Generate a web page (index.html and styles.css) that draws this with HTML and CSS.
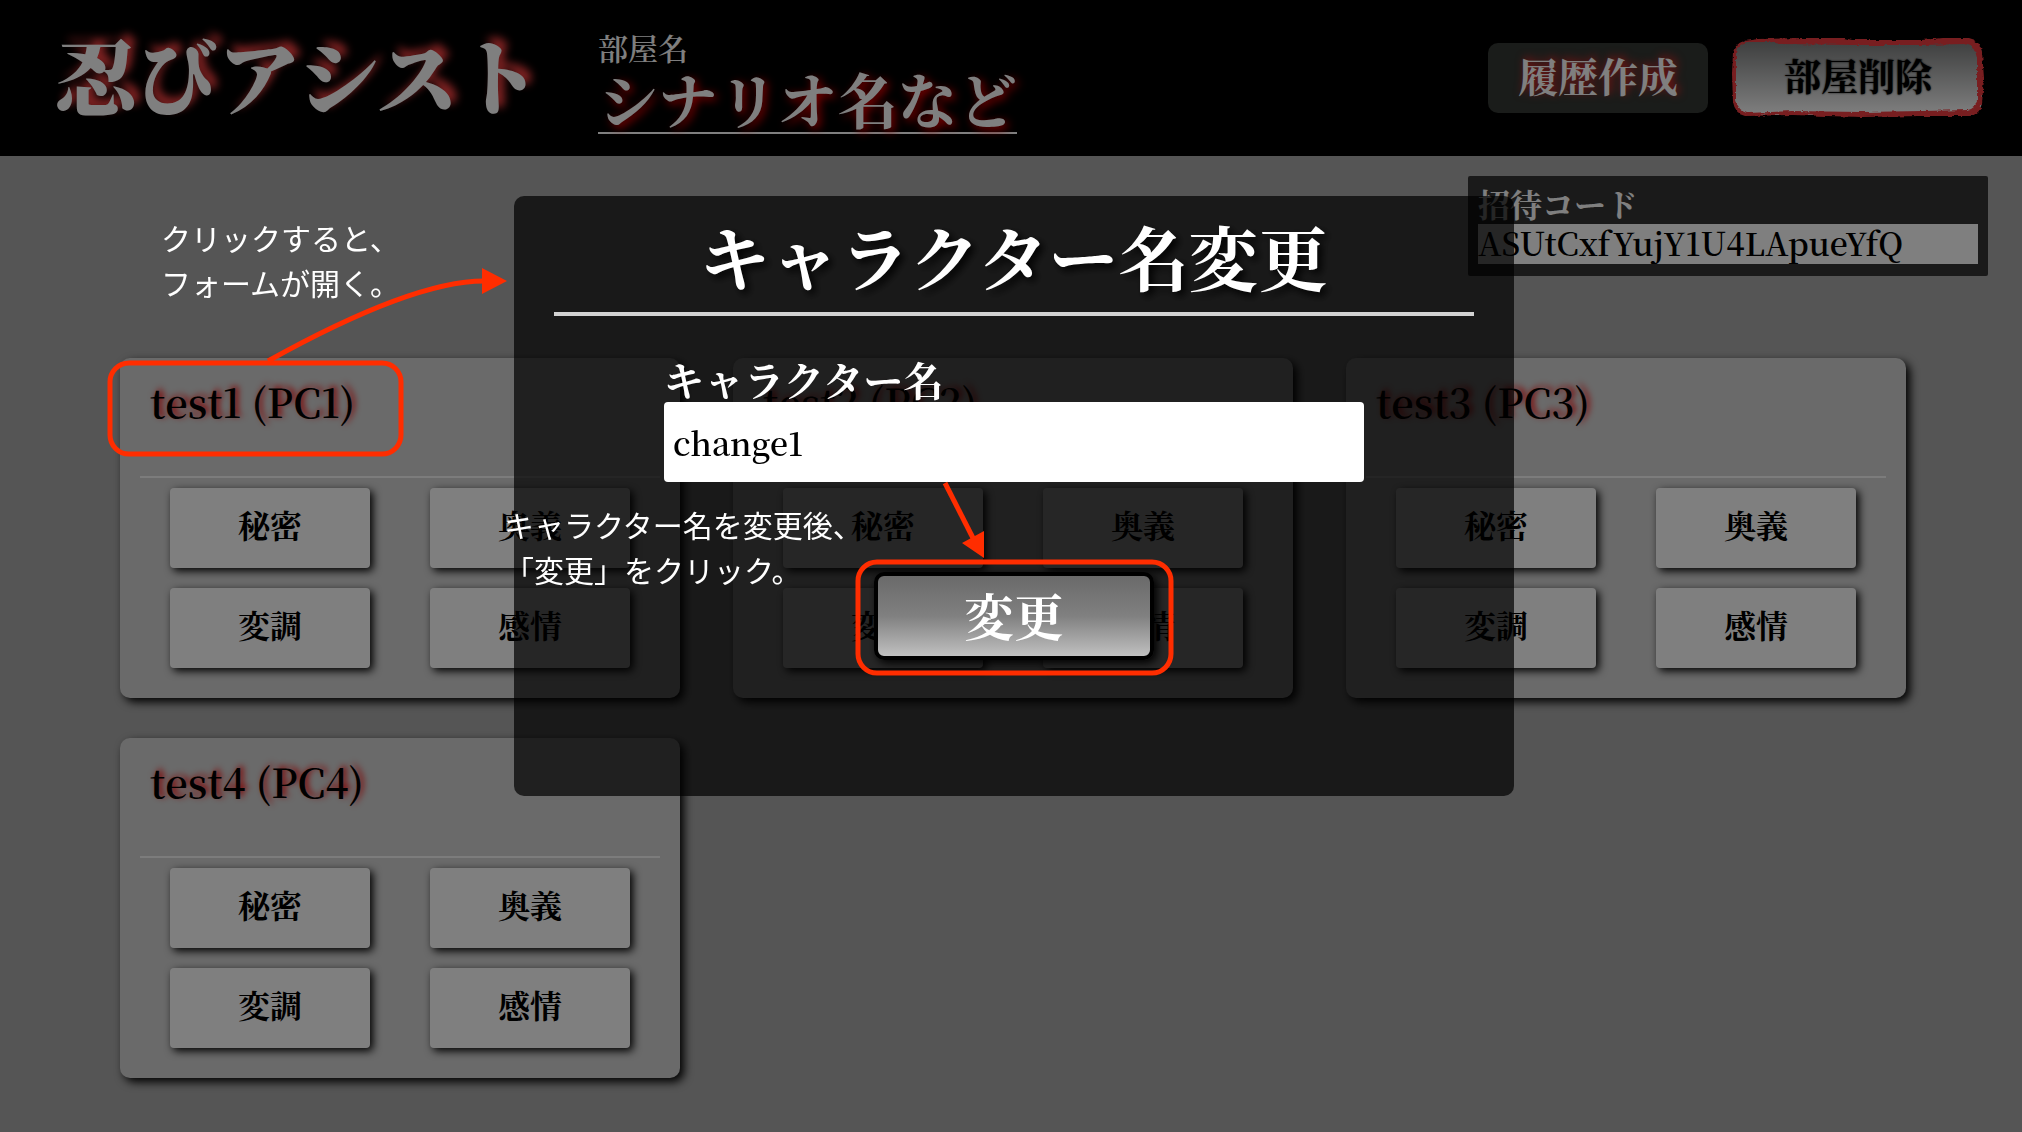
FILE: index.html
```html
<!DOCTYPE html>
<html lang="ja">
<head>
<meta charset="utf-8">
<title>忍びアシスト</title>
<link rel="stylesheet" href="styles.css">
</head>
<body>
<header class="header">
  <h1 class="logo">忍びアシスト</h1>
  <div class="room">
    <span class="room-label">部屋名</span>
    <span class="room-name">シナリオ名など</span>
  </div>
  <div class="header-actions">
    <button class="btn-history" type="button">履歴作成</button>
    <button class="btn-delete" type="button">部屋削除
      <svg class="brush" viewBox="0 0 252 80" aria-hidden="true">
        <defs>
          <filter id="rough" x="-5%" y="-10%" width="110%" height="120%">
            <feTurbulence type="fractalNoise" baseFrequency="0.12 0.3" numOctaves="3" seed="4"/>
            <feDisplacementMap in="SourceGraphic" scale="4" xChannelSelector="R" yChannelSelector="G"/>
          </filter>
        </defs>
        <path filter="url(#rough)" fill-rule="evenodd" d="M12 3L26 1L70 0L112 0L120 2L190 2L210 0L236 0Q248 2 250 14L252 40L250 66Q248 76 238 78L190 78L130 79L60 77L14 78Q3 76 1 64L0 36L1 14Q3 6 12 3ZM15 4Q5 6 4 16L4 62Q6 73 16 75L60 73L130 74L190 73L236 72Q244 70 245 62L245 20Q243 8 232 6L190 7L120 7L50 6L38 4Z"/>
      </svg>
    </button>
  </div>
</header>

<main class="main">
  <div class="invite">
    <label class="invite-label" for="invite">招待コード</label>
    <input class="invite-input" id="invite" type="text" readonly value="ASUtCxfYujY1U4LApueYfQ">
  </div>
  <section class="cards">
    <article class="card">
      <h2 class="card-title">test1 (PC1)</h2>
      <div class="card-buttons">
        <button type="button">秘密</button><button type="button">奥義</button>
        <button type="button">変調</button><button type="button">感情</button>
      </div>
    </article>
    <article class="card">
      <h2 class="card-title">test2 (PC2)</h2>
      <div class="card-buttons">
        <button type="button">秘密</button><button type="button">奥義</button>
        <button type="button">変調</button><button type="button">感情</button>
      </div>
    </article>
    <article class="card">
      <h2 class="card-title">test3 (PC3)</h2>
      <div class="card-buttons">
        <button type="button">秘密</button><button type="button">奥義</button>
        <button type="button">変調</button><button type="button">感情</button>
      </div>
    </article>
    <article class="card">
      <h2 class="card-title">test4 (PC4)</h2>
      <div class="card-buttons">
        <button type="button">秘密</button><button type="button">奥義</button>
        <button type="button">変調</button><button type="button">感情</button>
      </div>
    </article>
  </section>
</main>

<div class="overlay">
  <form class="modal">
    <h2 class="modal-title">キャラクター名変更</h2>
    <div class="field">
      <label class="field-label" for="name">キャラクター名</label>
      <input class="field-input" id="name" type="text" value="change1">
    </div>
    <button class="btn-submit" type="button">変更</button>
  </form>
</div>

<div class="notes">
  <svg class="marks" width="1200" height="700" aria-hidden="true">
    <g class="mark-line">
      <rect x="110" y="363" width="291" height="91" rx="19"/>
      <path d="M268 361Q412 281 484 281"/>
      <rect x="858" y="562" width="313" height="111" rx="19"/>
      <path d="M945 483L974 540"/>
    </g>
    <path class="mark-head" d="M482 268L507 281L482 294ZM962 543L984 531V558Z"/>
  </svg>
  <p class="note note-open">クリックすると、<br>フォームが開く。</p>
  <p class="note note-submit">キャラクター名を変更後、<br>「変更」をクリック。</p>
</div>
</body>
</html>
```

FILE: styles.css
```css
* {
  box-sizing: border-box;
}

body {
  margin: 0;
  min-height: 100vh;
  background: #aaa;
  color: #000;
  font-family: "Noto Serif CJK JP", "Noto Serif JP", "Liberation Serif", "Noto Sans CJK JP", serif;
  font-weight: 600;
  font-variant-numeric: tabular-nums;
}

h1, h2, p {
  margin: 0;
}

button, input {
  font: inherit;
  font-variant-numeric: tabular-nums;
  color: inherit;
  border: 0;
  padding: 0;
}

/* Header */
.header {
  display: flex;
  align-items: center;
  height: 156px;
  padding: 0 40px 0 54px;
  background: #000;
  color: #fff;
}

.logo {
  width: 544px;
  padding-bottom: 8px;
  font-size: 82px;
  line-height: 120px;
  font-weight: 900;
  white-space: nowrap;
  text-shadow: 6px -6px 8px #f44;
}

.room {
  display: flex;
  flex-direction: column;
  padding-top: 8px;
}

.room-label {
  font-size: 30px;
  line-height: 34px;
}

.room-name {
  border-bottom: 2px solid #fff;
  font-size: 60px;
  line-height: 68px;
  font-weight: 700;
  text-shadow: 3px 3px 10px #f00;
}

.header-actions {
  display: flex;
  align-items: center;
  gap: 26px;
  margin-left: auto;
}

.btn-history {
  width: 220px;
  height: 70px;
  padding-bottom: 8px;
  border-radius: 10px;
  background: #343834;
  font-size: 40px;
  font-weight: 700;
  text-shadow: 2px -2px 8px #f22;
}

.btn-delete {
  position: relative;
  width: 248px;
  height: 74px;
  padding-bottom: 6px;
  border-radius: 14px;
  background: linear-gradient(#7c7e7e, #fff);
  color: #000;
  font-size: 37px;
  font-weight: 700;
  text-shadow: 0 0 2px #000;
}

.brush {
  position: absolute;
  inset: -3px -2px;
  width: 252px;
  height: 80px;
  fill: #f03c40;
}

/* Invitation code */
.main {
  padding: 20px 34px 40px;
}

.invite {
  display: flex;
  flex-direction: column;
  width: 520px;
  height: 100px;
  margin-left: auto;
  padding: 6px 10px 12px;
  border-radius: 2px;
  background: #343434;
}

.invite-label {
  color: #fff;
  font-size: 32px;
  line-height: 42px;
  font-weight: 700;
}

.invite-input {
  width: 100%;
  height: 40px;
  padding-bottom: 4px;
  background: #fff;
  font-size: 32px;
}

/* Character cards */
.cards {
  display: grid;
  grid-template-columns: repeat(3, 1fr);
  gap: 40px 53px;
  padding: 82px 82px 0 86px;
}

.card {
  height: 340px;
  padding: 20px;
  border-radius: 10px;
  background: #d4d4d4;
  box-shadow: 4px 4px 10px #000;
}

.card-title {
  height: 100px;
  padding: 0 10px;
  border-bottom: 2px solid #f8f8f8;
  font-size: 40px;
  line-height: 46px;
  font-weight: 600;
  text-shadow: 3px -2px 6px #f00;
}

.card-buttons {
  display: grid;
  grid-template-columns: 1fr 1fr;
  gap: 20px 60px;
  padding: 10px 30px 0;
}

.card-buttons button {
  height: 80px;
  padding-bottom: 8px;
  border-radius: 4px;
  background: #fff;
  box-shadow: 3px 3px 8px #000;
  font-size: 32px;
  font-weight: 700;
}

/* Rename dialog */
.overlay {
  position: fixed;
  inset: 0;
  padding: 196px 0 0 6px;
  background: rgba(0, 0, 0, .5);
}

.modal {
  display: flex;
  flex-direction: column;
  align-items: center;
  width: 1000px;
  height: 600px;
  margin: 0 auto;
  padding: 10px 40px;
  border-radius: 10px;
  background: rgba(0, 0, 0, .7);
  color: #fff;
}

.modal-title {
  width: 100%;
  padding-bottom: 6px;
  border-bottom: 4px solid #d2d2d2;
  font-size: 70px;
  line-height: 100px;
  font-weight: 700;
  text-align: center;
  text-shadow: 4px 4px 8px #000;
}

.field {
  display: flex;
  flex-direction: column;
  width: 700px;
  margin-top: 40px;
}

.field-label {
  font-size: 40px;
  line-height: 46px;
  font-weight: 700;
}

.field-input {
  width: 100%;
  height: 80px;
  padding: 0 9px;
  border-radius: 4px;
  background: #fff;
  color: #000;
  font-size: 32px;
}

.btn-submit {
  width: 280px;
  height: 88px;
  margin-top: 90px;
  padding-bottom: 4px;
  border: 4px solid #000;
  border-radius: 10px;
  background: linear-gradient(#6a6a6a, #808080 50%, #c0c0c0);
  box-shadow: 3px 3px 8px #000;
  font-size: 50px;
  font-weight: 700;
}

/* Guide notes drawn over the screen */
.notes {
  position: absolute;
  inset: 0;
  pointer-events: none;
}

.mark-line {
  fill: none;
  stroke: #ff2d00;
  stroke-width: 5;
}

.mark-head {
  fill: #ff2d00;
}

.note {
  position: absolute;
  color: #fff;
  font-family: "Noto Sans CJK JP", sans-serif;
  font-size: 30px;
  line-height: 45px;
  font-weight: 400;
  white-space: nowrap;
}

.note-open {
  left: 161px;
  top: 215px;
}

.note-submit {
  left: 504px;
  top: 502px;
}
```
